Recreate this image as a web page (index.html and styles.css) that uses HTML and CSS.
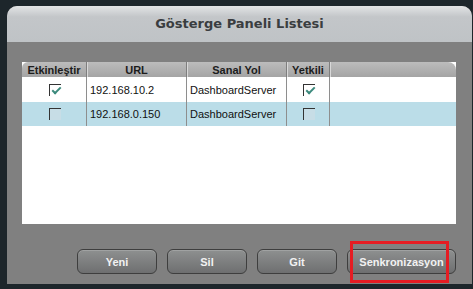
FILE: index.html
```html
<!DOCTYPE html>
<html lang="tr">
<head>
  <meta charset="UTF-8" />
  <title>Gösterge Paneli Listesi</title>
  <link rel="stylesheet" href="styles.css">
</head>
<body>
  <div class="dialog">
    <div class="dialog-header">Gösterge Paneli Listesi</div>
    <div class="dialog-body">
      <div class="list">
        <div class="row head">
          <div class="cell">Etkinleştir</div>
          <div class="cell">URL</div>
          <div class="cell">Sanal Yol</div>
          <div class="cell">Yetkili</div>
          <div class="cell filler"></div>
        </div>
        <div class="row">
          <div class="cell center"><span class="check on"></span></div>
          <div class="cell">192.168.10.2</div>
          <div class="cell">DashboardServer</div>
          <div class="cell center"><span class="check on"></span></div>
          <div class="cell filler"></div>
        </div>
        <div class="row selected">
          <div class="cell center"><span class="check"></span></div>
          <div class="cell">192.168.0.150</div>
          <div class="cell">DashboardServer</div>
          <div class="cell center"><span class="check"></span></div>
          <div class="cell filler"></div>
        </div>
      </div>
      <div class="buttons">
        <button type="button" class="btn">Yeni</button>
        <button type="button" class="btn">Sil</button>
        <button type="button" class="btn">Git</button>
        <button type="button" class="btn wide highlight">Senkronizasyon</button>
      </div>
    </div>
  </div>
</body>
</html>
```

FILE: styles.css
```css
body {
  margin: 0;
  background: #1d262b;
  font-family: "Liberation Sans", Arial, sans-serif;
  height: 289px;
  overflow: hidden;
}
.dialog {
  margin: 6px 1px 0 7px;
  height: 278px;
  display: flex;
  flex-direction: column;
  border-radius: 10px 10px 0 0;
  overflow: hidden;
  background: #808080;
}
.dialog-header {
  height: 36px;
  line-height: 36px;
  text-align: center;
  font-family: "DejaVu Sans", Verdana, sans-serif;
  font-weight: bold;
  font-size: 13px;
  color: #3a3d40;
  background: linear-gradient(#e2e4e5, #c3c6c9 30%, #bfc3c6);
}
.dialog-body {
  flex: 1;
  padding: 20px 16px 0 15px;
  display: flex;
  flex-direction: column;
}
.list {
  height: 162px;
  background: #fff;
}
.row {
  display: grid;
  grid-template-columns: 65px 100px 100px 43px 1fr;
  height: 25px;
  font-size: 11px;
  color: #111;
}
.row.selected {
  background: #bbdde8;
  height: 24px;
}
.cell {
  border-right: 1px solid #8e8e8e;
  display: flex;
  align-items: center;
  padding-left: 3px;
}
.cell.filler {
  border-right: none;
}
.cell.center {
  justify-content: center;
  padding-left: 0;
}
.row.head {
  height: 15px;
  background: linear-gradient(#bcbcbc, #a4a4a4);
  border-radius: 6px 8px 0 0;
  font-weight: bold;
  font-size: 11px;
  color: #1c1c1c;
}
.row.head .cell {
  justify-content: center;
  padding-left: 0;
  border-right: 1px solid #7e7e7e;
  box-shadow: 1px 0 0 #d8d8d8;
}
.row.head .cell.filler {
  border-right: none;
  box-shadow: none;
}
.check {
  width: 11px;
  height: 11px;
  border-top: 1px solid #333;
  border-left: 1px solid #333;
  background: #fff;
  position: relative;
  margin-left: 2px;
}
.selected .check {
  background: #c7dde6;
}
.check.on::after {
  content: "";
  position: absolute;
  left: 2px;
  top: 2px;
  width: 7px;
  height: 3px;
  border-left: 2px solid #3c8a7d;
  border-bottom: 2px solid #3c8a7d;
  transform: rotate(-45deg);
}
.buttons {
  display: flex;
  justify-content: flex-end;
  gap: 10px;
  margin-top: 25px;
}
.btn {
  width: 80px;
  height: 25px;
  border: 1px solid #3e3e3e;
  border-radius: 6px;
  background: linear-gradient(#8e9090, #6e6f70);
  color: #f2f2f2;
  font-family: "Liberation Sans", Arial, sans-serif;
  font-weight: bold;
  font-size: 11px;
  box-shadow: inset 0 1px 0 #a0a2a2;
  position: relative;
}
.btn.wide {
  width: 109px;
}
.btn.highlight::after {
  content: "";
  position: absolute;
  left: 2px;
  right: 6px;
  top: -9px;
  bottom: -10px;
  border: 3px solid #e51c23;
}
```
